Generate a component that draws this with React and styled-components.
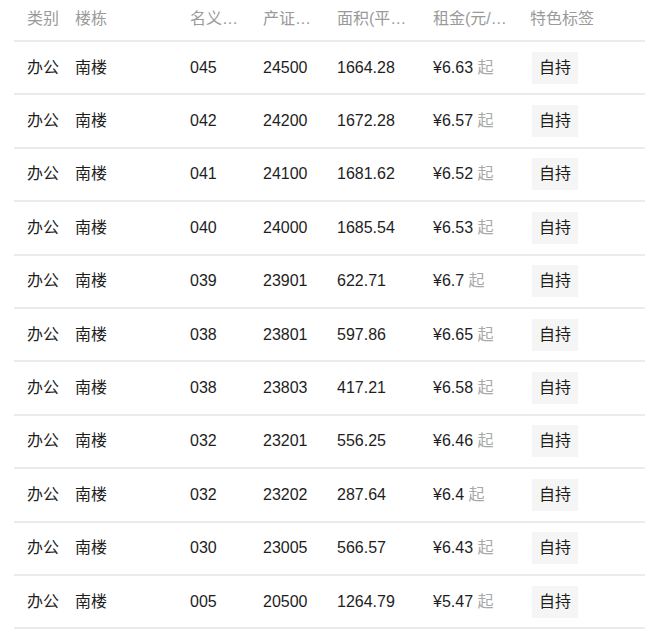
import React from "react";
import styled, { createGlobalStyle } from "styled-components";

const Global = createGlobalStyle`
  html, body { margin: 0; padding: 0; background: #fff; }
  body { font-family: "Liberation Sans", "Noto Sans CJK SC", sans-serif; }
`;

const Table = styled.div`
  margin-left: 14px;
  width: 631px;
`;

const Row = styled.div`
  display: grid;
  grid-template-columns: 48px 115px 73px 74px 96px 97px 128px;
  align-items: center;
  box-sizing: border-box;
  height: ${(p) => (p.$head ? "42px" : "53.4px")};
  border-bottom: 2px solid #ebebeb;
  padding-bottom: ${(p) => (p.$head ? "3px" : "0")};
`;

const Cell = styled.div`
  padding-left: 13px;
  font-size: 16px;
  line-height: 20px;
  color: ${(p) => (p.$head ? "#9a9a9a" : "#1e1e1e")};
  white-space: nowrap;
  overflow: hidden;
`;

const Muted = styled.span`
  color: #a8a8a8;
`;

const Tag = styled.span`
  display: inline-block;
  vertical-align: middle;
  margin-left: 2px;
  padding: 0 7px;
  height: 32px;
  line-height: 32px;
  background: #f5f5f5;
  color: #1e1e1e;
  font-size: 16px;
`;

const heads = ["类别", "楼栋", "名义…", "产证…", "面积(平…", "租金(元/…", "特色标签"];

const data = [
  ["045", "24500", "1664.28", "6.63"],
  ["042", "24200", "1672.28", "6.57"],
  ["041", "24100", "1681.62", "6.52"],
  ["040", "24000", "1685.54", "6.53"],
  ["039", "23901", "622.71", "6.7"],
  ["038", "23801", "597.86", "6.65"],
  ["038", "23803", "417.21", "6.58"],
  ["032", "23201", "556.25", "6.46"],
  ["032", "23202", "287.64", "6.4"],
  ["030", "23005", "566.57", "6.43"],
  ["005", "20500", "1264.79", "5.47"],
];

export default function App() {
  return (
    <>
      <Global />
      <Table>
        <Row $head>
          {heads.map((h) => (
            <Cell $head key={h}>{h}</Cell>
          ))}
        </Row>
        {data.map(([a, b, c, d], i) => (
          <Row key={i}>
            <Cell>办公</Cell>
            <Cell>南楼</Cell>
            <Cell>{a}</Cell>
            <Cell>{b}</Cell>
            <Cell>{c}</Cell>
            <Cell>
              ¥{d} <Muted>起</Muted>
            </Cell>
            <Cell>
              <Tag>自持</Tag>
            </Cell>
          </Row>
        ))}
      </Table>
    </>
  );
}
